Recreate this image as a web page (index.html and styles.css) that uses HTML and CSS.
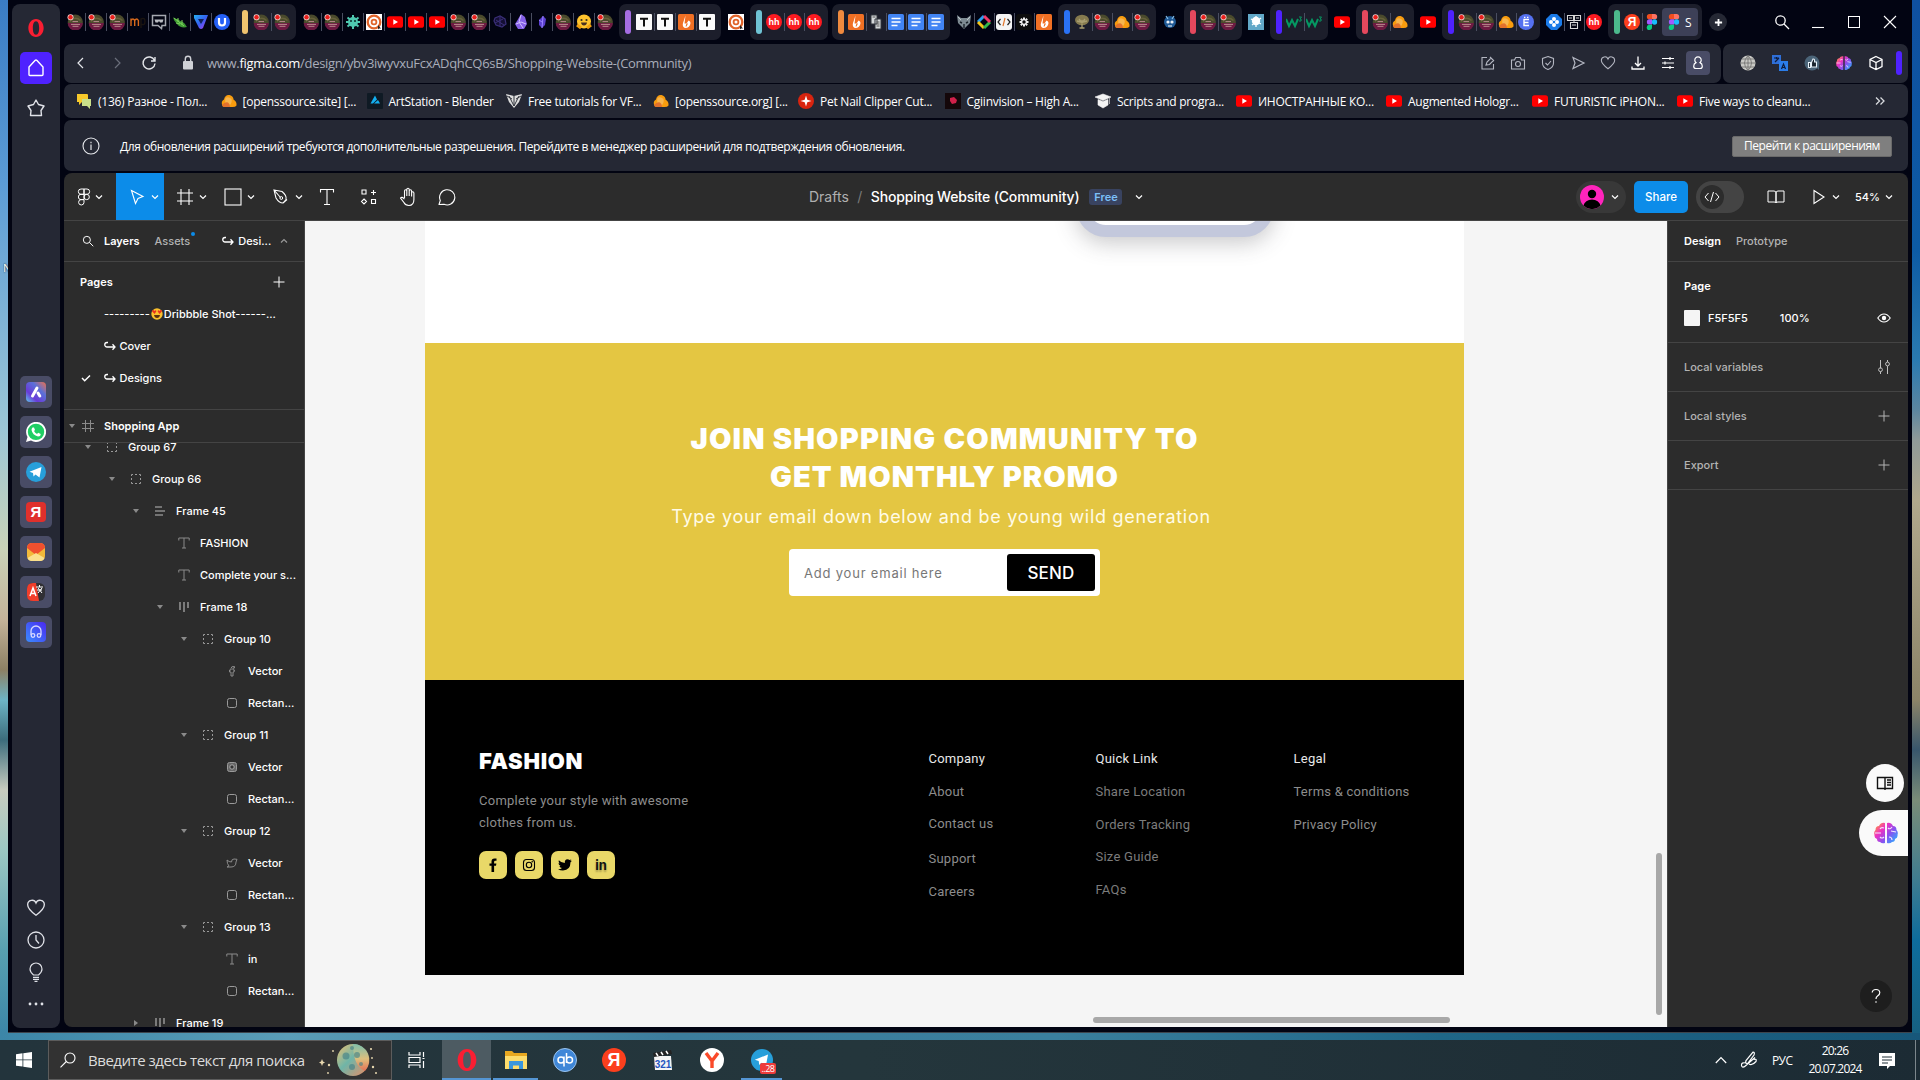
FILE: index.html
```html
<!DOCTYPE html>
<html lang="ru">
<head>
<meta charset="utf-8">
<title>Shopping Website (Community)</title>
<link rel="stylesheet" href="styles.css">
</head>
<body>
<svg class="defs" aria-hidden="true">
  <defs>
    <linearGradient id="g-brain" gradientUnits="userSpaceOnUse" x1="2" y1="2" x2="22" y2="20"><stop offset="0" stop-color="#ff9a3c"/><stop offset=".3" stop-color="#f032c0"/><stop offset=".62" stop-color="#8a50f0"/><stop offset="1" stop-color="#2ab0ff"/></linearGradient>
    <linearGradient id="g-aria" x1="0" y1="1" x2="1" y2="0"><stop offset="0" stop-color="#5fc8ee"/><stop offset=".3" stop-color="#6a3ad8"/><stop offset=".65" stop-color="#5a70d8"/><stop offset="1" stop-color="#f0704a"/></linearGradient>
    <linearGradient id="g-play" x1="0" y1="1" x2="1" y2="0"><stop offset="0" stop-color="#3a8cff"/><stop offset="1" stop-color="#4a28f0"/></linearGradient>
    <linearGradient id="g-v" x1="0" y1="0" x2="1" y2="1"><stop offset="0" stop-color="#25b0f0"/><stop offset=".5" stop-color="#3560f0"/><stop offset="1" stop-color="#c03cf0"/></linearGradient>
    <linearGradient id="g-moon" x1="0" y1="0" x2="1" y2="1"><stop offset="0" stop-color="#f0c070"/><stop offset=".45" stop-color="#6fb5a8"/><stop offset="1" stop-color="#f08a60"/></linearGradient>
    <linearGradient id="g-moon2" x1="0" y1="0" x2="0" y2="1"><stop offset="0" stop-color="#7ec0ae"/><stop offset=".55" stop-color="#e8c47a"/><stop offset="1" stop-color="#e86a50"/></linearGradient>
  </defs>
  <symbol id="radio" viewBox="0 0 16 16"><circle cx="8.300" cy="8" r="7.600" fill="#4a4a2c"/><path d="M.7 9h15.200a7.600 7.600 0 0 1-15.200 0z" fill="#6e1a42"/><path d="M3 7.500c3-4 7-4 10.500-1" stroke="#66613a" stroke-width="1.500" fill="none"/><path d="M5.500 7.600h5.500M4 10.400h9M5.500 12.300h6" stroke="#b98a8c" stroke-width="1"/><circle cx="3.500" cy="3.200" r="3" fill="#f1d0d0"/><circle cx="3.500" cy="3.200" r="2.200" fill="#e8201c"/></symbol>
  <symbol id="mp" viewBox="0 0 16 16"><path d="M1 12V4.500M1 6.500q2-3 3.700 0V12M4.700 6.500q2-3 3.700 0V12" fill="none" stroke="#d96a1c" stroke-width="1.400"/><path d="M11 14V5q4-2 4 2.500t-4 2.500" fill="none" stroke="#1a1410" stroke-width="1.400"/></symbol>
  <symbol id="bot" viewBox="0 0 16 16"><path d="M1.500 1.500h13v10h-3.500l-.5 3-3.500-3h-5.500z" fill="none" stroke="#a5a8b0" stroke-width="1.500"/><path d="M3.500 5.500h9l-1 3h-2.500l-1-1.500-1 1.500H4.500z" fill="#b9bcc2"/></symbol>
  <symbol id="leaf" viewBox="0 0 16 16"><path d="M1 3c3 3 4 1 6 3s3 1 5 3 2 3 3 4c-4 1-8 0-10-3S2 7 1 3z" fill="#3e9a34"/><path d="M2 4l10 8M6 4v4M10 6v5M4 9l4 1" stroke="#7cd05c" fill="none"/></symbol>
  <symbol id="vee" viewBox="0 0 16 16"><path d="M1 1h14l-5 13q-2 2-4 0L1 4z" fill="url(#g-v)"/><path d="M5 5h6l-3 5z" fill="#10205c"/></symbol>
  <symbol id="uu" viewBox="0 0 16 16"><circle cx="8" cy="8" r="8" fill="#2560f5"/><path d="M5 4v4.500a3 3 0 0 0 6 0V4" fill="none" stroke="#fff" stroke-width="2.200"/></symbol>
  <symbol id="virus" viewBox="0 0 16 16"><circle cx="8" cy="8" r="5" fill="#4fc8b0"/><path d="M8 1v14M1 8h14M2.500 3.500l11 9M13.500 3.500l-11 9" stroke="#4fc8b0" stroke-width="2"/><path d="M6 6v2M10 6v2" stroke="#0b2a2a" stroke-width="1.500"/></symbol>
  <symbol id="target" viewBox="0 0 16 16"><path d="M0 0h16v16H0z" fill="#fff"/><circle cx="8" cy="8" r="6.300" fill="none" stroke="#e0642a" stroke-width="2.300"/><circle cx="8" cy="8" r="2.400" fill="none" stroke="#e0642a" stroke-width="1.800"/><path d="M12 11v4.500l1-1h2z" fill="#222"/></symbol>
  <symbol id="yt" viewBox="0 0 16 16"><rect y="2.200" width="16" height="11.600" rx="2.600" fill="#f00"/><path d="M6.300 5.300v5.400L11 8z" fill="#fff"/></symbol>
  <symbol id="rock" viewBox="0 0 16 16"><path d="M3 4l5-2 5 3 1 5-4 3-6-2-2-4z" fill="#140f34" stroke="#3a2f78" stroke-width="1.200"/><path d="M4 6l8 5M8 3v9M3 9l8-4" stroke="#3a2f78"/></symbol>
  <symbol id="obs" viewBox="0 0 16 16"><path d="M8 0l4 3 2 7-3 5H5l-3-5 2-3z" fill="#8560e8"/><path d="M8 1L6 8l4 6M3 10l5-2 5 2" stroke="#d4c3ff" fill="none"/></symbol>
  <symbol id="gem" viewBox="0 0 16 16"><path d="M9 2l3 3-1 6-3 3-3-3V6z" fill="#5b3fd0"/><path d="M9 2L8 14M5 6l3 2" stroke="#9a85ff"/></symbol>
  <symbol id="hug" viewBox="0 0 16 16"><circle cx="8" cy="7.500" r="7" fill="#ffc42e"/><circle cx="5.500" cy="6" r="1.100" fill="#3a3020"/><circle cx="10.500" cy="6" r="1.100" fill="#3a3020"/><path d="M5 8.500h6q-.5 3-3 3t-3-3z" fill="#4a3020"/><path d="M1 11l4 3M15 11l-4 3" stroke="#f0a010" stroke-width="3"/></symbol>
  <symbol id="tt" viewBox="0 0 16 16"><rect width="16" height="16" rx="1" fill="#fafafa"/><path d="M4 4.800h8M8 4.800V12.500" stroke="#111" stroke-width="2"/></symbol>
  <symbol id="bolt" viewBox="0 0 16 16"><rect width="16" height="16" rx="1.500" fill="#f07024"/><path d="M7.500 1.500L5 9q-1 4 2 5 5 0 5.500-5 0-2-2-2.500l-2 3h-2z" fill="#fff"/><path d="M8.500 9.500l1.500 0-1.500 3-1 0z" fill="#f07024"/></symbol>
  <symbol id="hh" viewBox="0 0 16 16"><circle cx="8" cy="8" r="8" fill="#fb1a20"/><text x="8" y="11.200" text-anchor="middle" font-size="9" font-weight="700" fill="#fff">hh</text></symbol>
  <symbol id="pages" viewBox="0 0 16 16"><path d="M3 1h6v9H3zM7 5h6v10H7z" fill="#d5d8da" stroke="#30343c"/><path d="M8.500 8h3M8.500 10h3M8.500 12h3M4.500 3h3" stroke="#555"/></symbol>
  <symbol id="doc" viewBox="0 0 16 16"><rect width="16" height="16" rx="1.500" fill="#4285f4"/><path d="M3.500 4.500h9M3.500 8h9M3.500 11.500h6" stroke="#fff" stroke-width="1.600"/></symbol>
  <symbol id="fox" viewBox="0 0 16 16"><path d="M1 1l4 3h6l4-3-1 8-4 4-2 2-2-2-4-4z" fill="#7d8a92"/><path d="M4 8l2 1M12 8l-2 1M8 10v4" stroke="#1b232a" stroke-width="1.400"/><path d="M2 3l3 3M14 3l-3 3" stroke="#bfc8cc"/></symbol>
  <symbol id="diamond" viewBox="0 0 16 16"><path d="M8 2L2 8" stroke="#2aa0f0" stroke-width="3"/><path d="M2 8l6 6" stroke="#f5c518" stroke-width="3"/><path d="M8 14l6-6" stroke="#35b84a" stroke-width="3"/><path d="M14 8L8 2" stroke="#f03a6a" stroke-width="3"/></symbol>
  <symbol id="code" viewBox="0 0 16 16"><rect width="16" height="16" rx="3" fill="#f4f4f4"/><path d="M4.500 5L2 8l2.500 3M11.500 5L14 8l-2.500 3" stroke="#222" fill="none" stroke-width="1.200"/><path d="M9 4l-2 8" stroke="#e0742a" stroke-width="1.200"/></symbol>
  <symbol id="flower" viewBox="0 0 16 16"><rect width="16" height="16" rx="3" fill="#0d0d0d"/><path d="M8 3.500v9M3.500 8h9M4.800 4.800l6.400 6.400M11.200 4.800l-6.400 6.400" stroke="#eee" stroke-width="2"/><circle cx="8" cy="8" r="1.700" fill="#0d0d0d"/></symbol>
  <symbol id="tree" viewBox="0 0 16 16"><ellipse cx="8" cy="6" rx="7" ry="5.200" fill="#857a4e"/><path d="M8 6v8M5 5l3 4 3-4M5.500 14h5M3 7l4 1M13 7l-4 1" stroke="#a99e70" fill="none" stroke-width="1.300"/></symbol>
  <symbol id="pma" viewBox="0 0 16 16"><path d="M1 11.500q-1-3.500 2-5 1-5 5.500-4.500 4 1 4 4.500 3.500 2 3 6-1 1.500-4 1.500H3.500q-2 0-2.500-2.500z" fill="#f89c0e"/><path d="M4.500 5q3-2 6 1 1 4-2.500 7-5-1-3.500-8z" fill="#f6c06a" opacity=".7"/><path d="M1 12q3-3.500 6-2.500 2 1 2 4.500H3.500Q1.500 14 1 12z" fill="#e2712c"/></symbol>
  <symbol id="owl" viewBox="0 0 16 16"><circle cx="8" cy="8" r="6" fill="#1f5a96"/><path d="M4 2l2 3M12 2l-2 3" stroke="#8ac0e8" stroke-width="1.200"/><circle cx="6" cy="8" r="1.600" fill="#e8eef5"/><circle cx="10" cy="8" r="1.600" fill="#e8eef5"/><path d="M6 12h4" stroke="#fff"/></symbol>
  <symbol id="splat" viewBox="0 0 16 16"><rect width="16" height="16" fill="#62a8c8"/><circle cx="8" cy="7" r="4.200" fill="#fff"/><path d="M8 2v11M3 5l10 5M13 4L4 11" stroke="#fff" stroke-width="1.300"/></symbol>
  <symbol id="w3" viewBox="0 0 16 16"><path d="M0 5l3 7 3-6 3 6 3-7" fill="none" stroke="#059862" stroke-width="2"/><path d="M13 3h2.500L14 5q2 0 1 2h-2" fill="none" stroke="#059862"/></symbol>
  <symbol id="ee" viewBox="0 0 16 16"><circle cx="8" cy="8" r="8" fill="#5571f0"/><path d="M11 5.500H6v6h5M6 8.500h4.500" stroke="#fff" stroke-width="1.400" fill="none"/><path d="M6 3.300h1.400M9 3.300h1.400" stroke="#fff" stroke-width="1.300"/></symbol>
  <symbol id="clover" viewBox="0 0 16 16"><path d="M5 0h6l5 5v6l-5 5H5l-5-5V5z" fill="#1b7be8"/><circle cx="8" cy="5" r="2" fill="#fff"/><circle cx="8" cy="11" r="2" fill="#fff"/><circle cx="5" cy="8" r="2" fill="#fff"/><circle cx="11" cy="8" r="2" fill="#fff"/></symbol>
  <symbol id="robots" viewBox="0 0 16 16"><path d="M1.500 1.500h6v5h-6zM8.500 1.500h6v5h-6zM4.500 8.500h7v6h-7z" fill="none" stroke="#d8d8d8" stroke-width="1.100"/><path d="M3 4h3M10 4h3M6 11h4M8 7v2" stroke="#d8d8d8"/></symbol>
  <symbol id="ya" viewBox="0 0 16 16"><circle cx="8" cy="8" r="8" fill="#fc3f1d"/><text x="8" y="12.300" text-anchor="middle" font-size="12" font-weight="700" fill="#fff">Я</text></symbol>
  <symbol id="fig" viewBox="0 0 16 16"><path d="M5.500 0H8v5.300H5.500a2.650 2.650 0 0 1 0-5.300z" fill="#f24e1e"/><path d="M8 0h2.500a2.650 2.650 0 0 1 0 5.300H8z" fill="#ff7262"/><path d="M5.500 5.300H8v5.300H5.500a2.650 2.650 0 0 1 0-5.300z" fill="#a259ff"/><circle cx="10.500" cy="8" r="2.650" fill="#1abcfe"/><path d="M5.500 10.700H8v2.650a2.650 2.650 0 1 1-2.500-2.650z" fill="#0acf83"/></symbol>
  <symbol id="opera" viewBox="0 0 20 20"><path fill-rule="evenodd" d="M10 0c5 0 8.500 4.500 8.500 10S15 20 10 20 1.500 15.500 1.500 10 5 0 10 0zm0 2.500C7.500 2.500 6.500 6 6.500 10s1 7.500 3.500 7.500 3.500-3.500 3.500-7.500-1-7.500-3.500-7.500z" fill="#fa1e32"/></symbol>
  <symbol id="brain" viewBox="0 0 24 22"><path d="M11 1v20q-3 1-5-1-3 0-3-3-3-1-2.500-4-1-3 1-5 0-4 3.500-4 2-4 6-3z" fill="url(#g-brain)"/><path d="M13 1v20q3 1 5-1 3 0 3-3 3-1 2.500-4 1-3-1-5 0-4-3.500-4-2-4-6-3z" fill="url(#g-brain)"/><path d="M10 6q-3-1-4 1M1 11h6M10 15q-2 2-4 0M14 6q2 2 4-1M17 9l5 1M15 15q3 0 3 3" stroke="#f5e8ff" stroke-width="1.100" fill="none"/></symbol>
  <symbol id="chev" viewBox="0 0 8 8"><path d="M1 2.500l3 3 3-3" fill="none" stroke="currentColor" stroke-width="1.200"/></symbol>
  <symbol id="tri" viewBox="0 0 8 8"><path d="M1 2h6L4 6z" fill="#8a8a8a"/></symbol>
  <symbol id="group" viewBox="0 0 12 12"><rect x="1.500" y="1.500" width="9" height="9" fill="none" stroke="#9a9a9a" stroke-dasharray="1.500 2 2 2 1.500 0"/></symbol>
  <symbol id="rows" viewBox="0 0 12 12"><path d="M1 2h7M1 6h10M1 10h8" stroke="#8a8a8a" stroke-width="1.700"/></symbol>
  <symbol id="cols" viewBox="0 0 12 12"><path d="M2 1v8M6 1v10M10 1v6" stroke="#8a8a8a" stroke-width="1.700"/></symbol>
  <symbol id="txt" viewBox="0 0 12 12"><path d="M.8 3.500V1h10.400v2.500M6 1v10M4 11h4" fill="none" stroke="#8a8a8a"/></symbol>
  <symbol id="rect" viewBox="0 0 12 12"><rect x="1.500" y="1.500" width="9" height="9" rx="2" fill="none" stroke="#9a9a9a"/></symbol>
  <symbol id="plus" viewBox="0 0 12 12"><path d="M6 .5v11M.5 6h11" stroke="currentColor"/></symbol>
  <symbol id="search" viewBox="0 0 16 16"><circle cx="6.500" cy="6.500" r="4.700" fill="none" stroke="currentColor" stroke-width="1.300"/><path d="M10 10l5 5" stroke="currentColor" stroke-width="1.300"/></symbol>
  <symbol id="heart" viewBox="0 0 18 18"><path d="M9 15.500C5 12.500 1.500 9.500 1.500 6a3.900 3.900 0 0 1 7.500-1.500A3.900 3.900 0 0 1 16.500 6c0 3.500-3.500 6.500-7.500 9.500z" fill="none" stroke="currentColor" stroke-width="1.200"/></symbol>
  <symbol id="tg" viewBox="0 0 20 20"><circle cx="10" cy="10" r="10" fill="#279fda"/><path d="M3.500 9.800L15.500 5l-2 10.500-4-3-2 2-.5-3.500z" fill="#fff"/></symbol>
  <symbol id="turn" viewBox="0 0 12 10"><path d="M4 1.500H3a2 2 0 0 0 0 4.500h8M8.500 3.300L11 6 8.500 8.700" fill="none" stroke="currentColor" stroke-width="1.300"/></symbol>
</svg>

<div class="window">
  <aside class="rail">
    <svg class="i17 op"><use href="#opera"/></svg>
    <span class="home"><svg class="i20" viewBox="0 0 20 20"><path d="M4 17.500q-1 0-1-1V9l6-6.500q1-1 2 0L17 9v7.500q0 1-1 1z" fill="none" stroke="#fff" stroke-width="1.400"/></svg></span>
    <svg class="i20 star" viewBox="0 0 20 20"><path d="M10 2l2.500 4.500L18 8l-3 4.500.5 5H4.500l.5-5L2 8l5.500-1.500z" fill="none" stroke="#e0e2e8" stroke-width="1.400" stroke-linejoin="round"/></svg>
    <div class="apps">
      <span><svg class="i20" viewBox="0 0 20 20"><rect width="20" height="20" rx="4" fill="url(#g-aria)"/><path d="M6.500 14L11 6M12 11l1.800 3" stroke="#fff" stroke-width="3" stroke-linecap="round" fill="none"/></svg></span>
      <span><svg class="i20" viewBox="0 0 20 20"><path d="M0 20l1.500-5A10 10 0 1 1 5 18.500z" fill="#fff"/><circle cx="10" cy="9.900" r="8.200" fill="#1fcf64"/><path d="M6.500 5.500l1.500 0 1 2.500-1 1q1 2 3 3l1.200-1.200 2.500 1.200q0 2.500-2.700 2.500Q6.500 13 5.500 8q0-1.500 1-2.500z" fill="#fff"/></svg></span>
      <span><svg class="i20"><use href="#tg"/></svg></span>
      <span><svg class="i20" viewBox="0 0 20 20"><rect width="20" height="20" rx="4" fill="#e0302c"/><text x="10" y="15.300" text-anchor="middle" font-size="15" font-weight="700" fill="#fff">Я</text></svg></span>
      <span><svg class="i20" viewBox="0 0 20 20"><rect x="1" y="1" width="18" height="18" rx="5" fill="#f2b93a"/><path d="M1 6q0-5 5-5h8q5 0 5 5l-9 7z" fill="#f0502e"/><path d="M1.500 16l8.500-5 8.500 5q-1 3-4 3h-9q-3 0-4-3z" fill="#fbe08c"/></svg></span>
      <span><svg class="i20" viewBox="0 0 20 20"><rect x="1" y="1" width="18" height="18" rx="6" fill="#303034"/><path d="M7 1h3l3 18H7q-6 0-6-6V7q0-6 6-6z" fill="#f03e2c"/><path d="M4 14l3-8 3 8M5 11.500h4" fill="none" stroke="#fff" stroke-width="1.500"/><path d="M10 5h7M13.500 3v2M11 8h5M12 11l4-5M12 6l4 5" stroke="#fff" fill="none"/></svg></span>
      <span><svg class="i20" viewBox="0 0 20 20"><rect width="20" height="20" rx="4" fill="url(#g-play)"/><path d="M5 13V9a5 5 0 0 1 10 0v4" fill="none" stroke="#d8d8ff" stroke-width="1.300"/><circle cx="7" cy="13.500" r="1.800" fill="none" stroke="#d8d8ff" stroke-width="1.300"/><circle cx="13" cy="13.500" r="1.800" fill="none" stroke="#d8d8ff" stroke-width="1.300"/></svg></span>
    </div>
    <div class="rail-end">
      <svg class="i20"><use href="#heart"/></svg>
      <svg class="i20" viewBox="0 0 20 20"><circle cx="10" cy="10" r="8" fill="none" stroke="currentColor" stroke-width="1.300"/><path d="M10 5v5l3 3.500" fill="none" stroke="currentColor" stroke-width="1.300"/></svg>
      <svg class="i20 bulb" viewBox="0 0 20 20"><path d="M7.500 13q-3.500-3-3.500-6a6 6 0 0 1 12 0q0 3-3.500 6zM7 15.300h6M7 17.300h6M8.500 19.300h3" fill="none" stroke="currentColor" stroke-width="1.200"/></svg>
      <svg class="i20" viewBox="0 0 20 20"><g fill="currentColor"><circle cx="4" cy="10" r="1.400"/><circle cx="10" cy="10" r="1.400"/><circle cx="16" cy="10" r="1.400"/></g></svg>
    </div>
  </aside>

  <main class="main">
    <div class="tabs">
      <div class="set wide"><i><svg><use href="#radio"/></svg></i><i><svg><use href="#radio"/></svg></i><i><svg><use href="#radio"/></svg></i><i><svg><use href="#mp"/></svg></i><i><svg><use href="#bot"/></svg></i><i><svg><use href="#leaf"/></svg></i><i><svg><use href="#vee"/></svg></i><i><svg><use href="#uu"/></svg></i></div>
      <div class="set wide island sand"><i><svg><use href="#radio"/></svg></i><i><svg><use href="#radio"/></svg></i></div>
      <div class="set wide"><i><svg><use href="#radio"/></svg></i><i><svg><use href="#radio"/></svg></i><i><svg><use href="#virus"/></svg></i><i><svg><use href="#target"/></svg></i><i><svg><use href="#yt"/></svg></i><i><svg><use href="#yt"/></svg></i><i><svg><use href="#yt"/></svg></i><i><svg><use href="#radio"/></svg></i><i><svg><use href="#radio"/></svg></i><i><svg><use href="#rock"/></svg></i><i><svg><use href="#obs"/></svg></i><i><svg><use href="#gem"/></svg></i><i><svg><use href="#radio"/></svg></i><i><svg><use href="#hug"/></svg></i><i><svg><use href="#radio"/></svg></i></div>
      <div class="set wide island violet"><i><svg><use href="#tt"/></svg></i><i><svg><use href="#tt"/></svg></i><i><svg><use href="#bolt"/></svg></i><i><svg><use href="#tt"/></svg></i></div>
      <div class="set wide"><i><svg><use href="#target"/></svg></i></div>
      <div class="set island aqua"><i><svg><use href="#hh"/></svg></i><i><svg><use href="#hh"/></svg></i><i><svg><use href="#hh"/></svg></i></div>
      <div class="set island orange"><i><svg><use href="#bolt"/></svg></i><i><svg><use href="#pages"/></svg></i><i><svg><use href="#doc"/></svg></i><i><svg><use href="#doc"/></svg></i><i><svg><use href="#doc"/></svg></i></div>
      <div class="set"><i><svg><use href="#fox"/></svg></i><i><svg><use href="#diamond"/></svg></i><i><svg><use href="#code"/></svg></i><i><svg><use href="#flower"/></svg></i><i><svg><use href="#bolt"/></svg></i></div>
      <div class="set island blue"><i><svg><use href="#tree"/></svg></i><i><svg><use href="#radio"/></svg></i><i><svg><use href="#pma"/></svg></i><i><svg><use href="#radio"/></svg></i></div>
      <div class="set"><i><svg><use href="#owl"/></svg></i></div>
      <div class="set island red"><i><svg><use href="#radio"/></svg></i><i><svg><use href="#radio"/></svg></i></div>
      <div class="set"><i><svg><use href="#splat"/></svg></i></div>
      <div class="set island indigo"><i><svg><use href="#w3"/></svg></i><i><svg><use href="#w3"/></svg></i></div>
      <div class="set"><i><svg><use href="#yt"/></svg></i></div>
      <div class="set island red"><i><svg><use href="#radio"/></svg></i><i><svg><use href="#pma"/></svg></i></div>
      <div class="set"><i><svg><use href="#yt"/></svg></i></div>
      <div class="set island indigo"><i><svg><use href="#radio"/></svg></i><i><svg><use href="#radio"/></svg></i><i><svg><use href="#pma"/></svg></i><i><svg><use href="#ee"/></svg></i></div>
      <div class="set"><i><svg><use href="#clover"/></svg></i><i><svg><use href="#robots"/></svg></i><i><svg><use href="#hh"/></svg></i></div>
      <div class="set island green"><i><svg><use href="#ya"/></svg></i><i><svg><use href="#fig"/></svg></i><b class="active"><svg><use href="#fig"/></svg><span>S</span></b></div>
      <span class="newtab"><svg viewBox="0 0 10 10"><path d="M5 1v8M1 5h8" stroke="#fff" stroke-width="2"/></svg></span>
      <div class="caption">
        <svg><use href="#search"/></svg>
        <svg viewBox="0 0 16 16"><path d="M2 13.500h12" stroke="#fff" stroke-width="1.100"/></svg>
        <svg viewBox="0 0 16 16"><rect x="2.500" y="2.500" width="11" height="11" fill="none" stroke="#fff"/></svg>
        <svg viewBox="0 0 16 16"><path d="M2 2l12 12M14 2L2 14" stroke="#fff" stroke-width="1.100"/></svg>
      </div>
    </div>

    <div class="addr-row">
      <div class="panel addr">
        <svg viewBox="0 0 16 16"><path d="M10 3L5 8l5 5" fill="none" stroke="#e4e6ea" stroke-width="1.200"/></svg>
        <svg viewBox="0 0 16 16"><path d="M6 3l5 5-5 5" fill="none" stroke="#6b6f7b" stroke-width="1.200"/></svg>
        <svg viewBox="0 0 16 16"><path d="M13.500 5.500A6 6 0 1 0 14 8.500M14 2v4h-4" fill="none" stroke="#e4e6ea" stroke-width="1.400"/></svg>
        <svg class="lock" viewBox="0 0 16 16"><rect x="3" y="6" width="10" height="8.500" rx="1" fill="#cfd1d6"/><path d="M5.300 6.500V4a2.700 2.700 0 0 1 5.400 0v2.500" fill="none" stroke="#cfd1d6" stroke-width="1.400"/></svg>
        <span class="url">www.<em>figma.com</em>/design/ybv3iwyvxuFcxADqhCQ6sB/Shopping-Website-(Community)</span>
        <div class="tools">
          <svg viewBox="0 0 16 16"><path d="M7 2.500H2v11.500h11.500V9M6 10l1-3 4-4 2.500 2.500-4 4zM10 2l4 4" fill="none" stroke="currentColor" stroke-width="1.100"/></svg>
          <svg viewBox="0 0 16 16"><path d="M1.500 5h3l1.200-2.500h4.600L11.500 5h3v9h-13z" fill="none" stroke="currentColor" stroke-width="1.100"/><circle cx="8" cy="9" r="2.500" fill="none" stroke="currentColor" stroke-width="1.100"/></svg>
          <svg viewBox="0 0 16 16"><path d="M8 1.500l5.500 2V8q0 4.500-5.500 6.500Q2.500 12.500 2.500 8V3.500zM5.500 8l2 2 3.500-4" fill="none" stroke="currentColor" stroke-width="1.100"/></svg>
          <svg viewBox="0 0 16 16"><path d="M3 2.500L14 8 3 13.500 5 8z" fill="none" stroke="currentColor" stroke-width="1.200"/></svg>
          <svg><use href="#heart"/></svg>
          <svg class="hot" viewBox="0 0 16 16"><path d="M8 1.500v9M5 8l3 3 3-3M2 11.500V14h12v-2.500" fill="none" stroke="currentColor" stroke-width="1.300"/></svg>
          <svg class="hot" viewBox="0 0 16 16"><path d="M2 3.500h12M2 8h12M2 12.500h12M10 2v3M5 6.500v3M10 11v3" stroke="currentColor" stroke-width="1.200"/></svg>
          <span class="user"><svg viewBox="0 0 16 16"><path d="M6 7.600a3.200 3.200 0 1 1 4 0q2.300 1 2.300 3.600 0 2.300-2.300 2.300H6q-2.300 0-2.300-2.300 0-2.600 2.300-3.600z" fill="none" stroke="#fff" stroke-width="1.200"/></svg></span>
        </div>
      </div>
      <div class="panel ext">
        <svg viewBox="0 0 16 16"><circle cx="8" cy="8" r="7.500" fill="#c8c8c4"/><path d="M8 0v16M0 8h16M2 4h12M2 12h12M8 .5q-7 7.500 0 15M8 .5q7 7.500 0 15" fill="none" stroke="#6d6d6d" stroke-width=".8"/></svg>
        <svg viewBox="0 0 16 16"><path d="M0 0h9v9H0z" fill="#2f6fd8"/><path d="M7 6h9v10H7z" fill="#2b7de9"/><path d="M2 3h5M4.500 2v2M3 7l4-4M9.500 14l2-5 2 5M10 12.500h3" stroke="#0e1c3c" stroke-width="1.200" fill="none"/></svg>
        <svg viewBox="0 0 16 16"><circle cx="8" cy="8" r="7.500" fill="#4b6478"/><path d="M9 9h6v6z" fill="#4b6478"/><path d="M4.500 7.500h2v5h-2zM7.500 7.500L9 4q2-.5 1.500 3h2v5h-5z" fill="#17212b" stroke="#e8f2fa" stroke-width="1.100"/></svg>
        <svg><use href="#brain"/></svg>
        <svg viewBox="0 0 16 16"><path d="M8 1.500l6 3v7l-6 3-6-3v-7zM2 4.500l6 3 6-3M8 7.500v7" fill="none" stroke="#fff" stroke-width="1.300"/></svg>
        <span class="mark"></span>
      </div>
    </div>

    <nav class="panel bookmarks">
      <a><svg viewBox="0 0 16 16"><path d="M1 1h10q1 0 1 1v6q0 1-1 1H6l-3 3V9H1z" fill="#f7c92a"/><path d="M6 6h9v7h-1v3l-3-3H6z" fill="#c9e08a"/></svg>(136) Разное - Пол...</a>
      <a><svg><use href="#pma"/></svg>[openssource.site] [...</a>
      <a><svg viewBox="0 0 16 16"><rect width="16" height="16" rx="1" fill="#0f1a24"/><path d="M8 2.500l2 4-4 4H3.500zM7 10.500h6l-2-3.500z" fill="#13aff0"/></svg>ArtStation - Blender</a>
      <a><svg viewBox="0 0 16 16"><path d="M0 1l8 2 8-2-3 8-5 6-5-6z" fill="#dedede"/><path d="M3 3l5 10 5-10M8 3v10M1 3l5 3M15 3l-5 3" stroke="#33363f" fill="none"/></svg>Free tutorials for VF...</a>
      <a><svg><use href="#pma"/></svg>[openssource.org] [...</a>
      <a><svg viewBox="0 0 16 16"><circle cx="8" cy="8" r="8" fill="#d8240f"/><path d="M8 2.500L9.300 6.700 13.500 8 9.300 9.300 8 13.500 6.700 9.300 2.500 8l4.200-1.300z" fill="#fff"/></svg>Pet Nail Clipper Cut...</a>
      <a><svg viewBox="0 0 16 16"><rect width="16" height="16" fill="#14070a"/><path d="M5 5l4-1 3 3-1 3-4 1-2-3z" fill="#d0204a"/></svg>Cgiinvision – High A...</a>
      <a><svg viewBox="0 0 16 16"><path d="M0 4l8-3 8 3-8 3.500zM3 6.500l5 2 5-2V12l-5 3-5-3zM14.500 5v6" fill="#f4f4f4" stroke="#f4f4f4" stroke-width=".6"/></svg>Scripts and progra...</a>
      <a><svg><use href="#yt"/></svg>ИНОСТРАННЫЕ КО...</a>
      <a><svg><use href="#yt"/></svg>Augmented Hologr...</a>
      <a><svg><use href="#yt"/></svg>FUTURISTIC iPHON...</a>
      <a><svg><use href="#yt"/></svg>Five ways to cleanu...</a>
      <svg class="more" viewBox="0 0 16 16"><path d="M4 4.500L7.500 8 4 11.500M8.500 4.500L12 8l-3.500 3.500" fill="none" stroke="#d8dade" stroke-width="1.300"/></svg>
    </nav>

    <div class="panel notice">
      <svg class="i18" viewBox="0 0 18 18"><circle cx="9" cy="9" r="8" fill="none" stroke="#e6e8ec" stroke-width="1.100"/><path d="M9 7.500v5.500M9 4.800v1.400" stroke="#e6e8ec" stroke-width="1.200"/></svg>
      <p>Для обновления расширений требуются дополнительные разрешения. Перейдите в менеджер расширений для подтверждения обновления.</p>
      <button>Перейти к расширениям</button>
    </div>

    <section class="figma">
      <header class="bar">
        <div class="cell logo"><svg viewBox="0 0 14 18"><path d="M4 1h3v5.300H4A2.650 2.650 0 0 1 4 1zM7 1h3a2.650 2.650 0 0 1 0 5.300H7zM4 6.300h3v5.300H4a2.650 2.650 0 0 1 0-5.300zM4 11.600h3v2.700a2.700 2.700 0 1 1-3-2.700z" fill="none" stroke="#fff"/><circle cx="9.700" cy="9" r="2.650" fill="none" stroke="#fff"/></svg><svg class="chev"><use href="#chev"/></svg></div>
        <div class="cell on"><svg viewBox="0 0 18 18"><path d="M3.500 2.500l11.500 6-5 2-2.500 5z" fill="none" stroke="#fff" stroke-width="1.100"/></svg><svg class="chev"><use href="#chev"/></svg></div>
        <div class="cell"><svg viewBox="0 0 18 18"><path d="M5 1v16M13 1v16M1 5h16M1 13h16" stroke="#fff" stroke-width="1.100"/></svg><svg class="chev"><use href="#chev"/></svg></div>
        <div class="cell"><svg viewBox="0 0 18 18"><rect x="1" y="1" width="16" height="16" fill="none" stroke="#fff" stroke-width="1.100"/></svg><svg class="chev"><use href="#chev"/></svg></div>
        <div class="cell"><svg viewBox="0 0 18 18"><path d="M2 2l8 1.500q5 4 4 8L11 15q-4 0-7-5zM2 2l6.500 7.500M11 15l4-3.500" fill="none" stroke="#fff" stroke-width="1.100"/><circle cx="9.300" cy="10" r="1.400" fill="none" stroke="#fff"/></svg><svg class="chev"><use href="#chev"/></svg></div>
        <div class="cell one"><svg viewBox="0 0 18 18"><path d="M2.500 4.500V1.500h13v3M9 1.500v15M6 16.500h6" fill="none" stroke="#fff" stroke-width="1.100"/></svg></div>
        <div class="cell one comp"><svg viewBox="0 0 18 18"><path d="M2 2h4v4H2zM13.500 2v5M11 4.500h5M11.500 11.500h4v4h-4zM4 11l2.500 2.500L4 16l-2.500-2.500z" fill="none" stroke="#fff" stroke-width="1.100"/></svg></div>
        <div class="cell one"><svg class="hand" viewBox="0 0 20 20"><path d="M6.500 11V4q0-1.300 1.100-1.300T8.800 4v5M8.800 9V2.500q0-1.300 1.200-1.300t1.200 1.300V9M11.200 4q0-1.300 1.200-1.300T13.600 4v5.500M13.600 6q0-1.200 1.100-1.200T15.900 6v6.500q0 6-5 6-3.500 0-5-3L2.500 11q1.500-1.800 4 1.200" fill="none" stroke="#fff" stroke-width="1.100"/></svg></div>
        <div class="cell one say"><svg viewBox="0 0 18 18"><path d="M1 16.500l1.300-4A7.600 7.600 0 1 1 6 16.200z" fill="none" stroke="#fff" stroke-width="1.100" stroke-linejoin="round"/></svg></div>
        <div class="crumb"><span>Drafts</span><u>/</u><strong>Shopping Website (Community)</strong><em>Free</em><svg class="chev"><use href="#chev"/></svg></div>
        <div class="acts">
          <div class="me"><svg class="face" viewBox="0 0 24 24"><circle cx="12" cy="12" r="12" fill="#ff24bd"/><circle cx="12" cy="9" r="4.200"/><path d="M3.500 20.500a8.600 7 0 0 1 17 0A12 12 0 0 1 3.500 20.500z"/></svg><svg class="chev"><use href="#chev"/></svg></div>
          <button class="share">Share</button>
          <div class="toggle"><span><svg viewBox="0 0 16 12"><path d="M4.500 2L1 6l3.500 4M11.500 2L15 6l-3.500 4M9.500 1l-3 10" fill="none" stroke="#fff"/></svg></span></div>
          <svg class="i18 book" viewBox="0 0 18 18"><path d="M1 3h6q2 0 2 2v10q0-1-2-1H1zM17 3h-6q-2 0-2 2v10q0-1 2-1h6z" fill="none" stroke="#fff"/></svg>
          <svg class="i18 play" viewBox="0 0 18 18"><path d="M4 2.500L14 9 4 15.500z" fill="none" stroke="#fff" stroke-width="1.100"/></svg>
          <svg class="chev"><use href="#chev"/></svg>
          <span class="pct">54%</span><svg class="chev"><use href="#chev"/></svg>
        </div>
      </header>

      <div class="work">
        <aside class="left">
          <div class="ltabs"><svg class="s12"><use href="#search"/></svg><b>Layers</b><span class="assets">Assets<i></i></span><span class="pg"><svg class="turn"><use href="#turn"/></svg>Desi...</span><svg class="chev up"><use href="#chev"/></svg></div>
          <div class="pages">
            <div class="phead"><b>Pages</b><svg class="s12"><use href="#plus"/></svg></div>
            <div class="prow"><span>---------</span><svg class="emoji" viewBox="0 0 12 12"><circle cx="6" cy="6" r="5.700" fill="#fbc02d"/><path d="M.8 3q1.500-2 2.500 0 2-1.500 2 .5L3.500 6zM11.200 3q-1.500-2-2.500 0-2-1.500-2 .5L8.500 6z" fill="#e8321e"/><path d="M3 7h6q-.5 3-3 3T3 7z" fill="#5a3010"/></svg><span>Dribbble Shot------...</span></div>
            <div class="prow"><svg class="turn"><use href="#turn"/></svg><span>Cover</span></div>
            <div class="prow"><svg class="check" viewBox="0 0 10 8"><path d="M1 4l2.700 2.700L9 1.500" fill="none" stroke="#fff" stroke-width="1.500"/></svg><svg class="turn"><use href="#turn"/></svg><span>Designs</span></div>
          </div>
          <div class="root"><svg class="tri"><use href="#tri"/></svg><svg class="s12" viewBox="0 0 12 12"><path d="M3.500 0v12M8.500 0v12M0 3.500h12M0 8.500h12" stroke="#8a8a8a"/></svg><b>Shopping App</b></div>
          <div class="tree">
            <div class="row l1 cut"><svg class="tri"><use href="#tri"/></svg><svg class="s12"><use href="#group"/></svg><span>Group 67</span></div>
            <div class="row l2"><svg class="tri"><use href="#tri"/></svg><svg class="s12"><use href="#group"/></svg><span>Group 66</span></div>
            <div class="row l3"><svg class="tri"><use href="#tri"/></svg><svg class="s12"><use href="#rows"/></svg><span>Frame 45</span></div>
            <div class="row l4"><svg class="tri"></svg><svg class="s12"><use href="#txt"/></svg><span>FASHION</span></div>
            <div class="row l4"><svg class="tri"></svg><svg class="s12"><use href="#txt"/></svg><span>Complete your s...</span></div>
            <div class="row l4"><svg class="tri"><use href="#tri"/></svg><svg class="s12"><use href="#cols"/></svg><span>Frame 18</span></div>
            <div class="row l5"><svg class="tri"><use href="#tri"/></svg><svg class="s12"><use href="#group"/></svg><span>Group 10</span></div>
            <div class="row l6"><svg class="tri"></svg><svg class="s12" viewBox="0 0 12 12"><path d="M5 11V7H3.500V5H5V3.500Q5 1 8.500 1.500V3H7v2h1.500L8 7H7v4z" fill="none" stroke="#8a8a8a"/></svg><span>Vector</span></div>
            <div class="row l6"><svg class="tri"></svg><svg class="s12"><use href="#rect"/></svg><span>Rectan...</span></div>
            <div class="row l5"><svg class="tri"><use href="#tri"/></svg><svg class="s12"><use href="#group"/></svg><span>Group 11</span></div>
            <div class="row l6"><svg class="tri"></svg><svg class="s12" viewBox="0 0 12 12"><rect x="1.500" y="1.500" width="9" height="9" rx="2" fill="#666" stroke="#9a9a9a"/><circle cx="6" cy="6" r="2.200" fill="#333" stroke="#aaa"/></svg><span>Vector</span></div>
            <div class="row l6"><svg class="tri"></svg><svg class="s12"><use href="#rect"/></svg><span>Rectan...</span></div>
            <div class="row l5"><svg class="tri"><use href="#tri"/></svg><svg class="s12"><use href="#group"/></svg><span>Group 12</span></div>
            <div class="row l6"><svg class="tri"></svg><svg class="s12" viewBox="0 0 12 12"><path d="M1 3q2 2 4.500 2Q5.500 2 8 2l3 .3L10 5q0 5-5 5H1l2-1Q1 7 1 3z" fill="none" stroke="#8a8a8a"/></svg><span>Vector</span></div>
            <div class="row l6"><svg class="tri"></svg><svg class="s12"><use href="#rect"/></svg><span>Rectan...</span></div>
            <div class="row l5"><svg class="tri"><use href="#tri"/></svg><svg class="s12"><use href="#group"/></svg><span>Group 13</span></div>
            <div class="row l6"><svg class="tri"></svg><svg class="s12"><use href="#txt"/></svg><span>in</span></div>
            <div class="row l6"><svg class="tri"></svg><svg class="s12"><use href="#rect"/></svg><span>Rectan...</span></div>
            <div class="row l3"><svg class="tri closed"><use href="#tri"/></svg><svg class="s12"><use href="#cols"/></svg><span>Frame 19</span></div>
          </div>
        </aside>

        <div class="canvas">
          <div class="board">
            <div class="white"><div class="phone"></div></div>
            <div class="promo">
              <h1>JOIN SHOPPING COMMUNITY TO<br><span>GET MONTHLY PROMO</span></h1>
              <p>Type your email down below and be young wild generation</p>
              <div class="field"><span>Add your email here</span><b>SEND</b></div>
            </div>
            <div class="foot">
              <div class="brand">
                <h2>FASHION</h2>
                <p>Complete your style with awesome<br>clothes from us.</p>
                <div class="social">
                  <span><svg viewBox="0 0 14 14"><path d="M5.500 14V7.800H3.500V5.400h2V3.600Q5.500.5 8.500.5h2v2.300H9.200q-1.100 0-1.100 1.100v1.500h2.300L10 7.800H8.100V14z"/></svg></span>
                  <span><svg viewBox="0 0 14 14"><rect x="1.500" y="1.500" width="11" height="11" rx="3" fill="none" stroke="#000" stroke-width="1.100"/><circle cx="7" cy="7" r="2.700" fill="none" stroke="#000" stroke-width="1.100"/><circle cx="10.200" cy="3.800" r=".8"/></svg></span>
                  <span><svg viewBox="0 0 14 14"><path d="M.8 2.200Q3.500 5 6.800 5 6.500 1.500 9.500 1.300q1.200 0 2 .8l1.800-.7-.9 1.500L14 2.700l-1.500 1.500Q12.500 12 5 12.500q-3 0-5-1.300 2.500.1 4-1.200-2-.2-2.600-2h1.200Q.4 7.200.5 5l1.200.4Q.1 4 .8 2.200z"/></svg></span>
                  <span class="in">in</span>
                </div>
              </div>
              <ul class="c1"><li>Company</li><li>About</li><li>Contact us</li><li>Support</li><li>Careers</li></ul>
              <ul class="c2"><li>Quick Link</li><li>Share Location</li><li>Orders Tracking</li><li>Size Guide</li><li>FAQs</li></ul>
              <ul class="c3"><li>Legal</li><li>Terms &amp; conditions</li><li>Privacy Policy</li></ul>
            </div>
          </div>
          <div class="vbar"></div><div class="hbar"></div>
        </div>

        <aside class="right">
          <div class="rtabs"><b>Design</b><span>Prototype</span></div>
          <div class="page"><b>Page</b><div class="fill"><i></i><span>F5F5F5</span><span class="op100">100%</span><svg class="eye" viewBox="0 0 14 10"><path d="M.8 5Q3.500 1 7 1t6.200 4Q10.500 9 7 9T.8 5z" fill="none" stroke="#fff" stroke-width="1.200"/><circle cx="7" cy="5" r="2.200" fill="#fff"/></svg></div></div>
          <div class="opt">Local variables<svg viewBox="0 0 14 16"><path d="M3.500 1v8.500M3.500 12.500v2.500M10.500 1v2M10.500 7v8" stroke="#c0c0c0"/><circle cx="3.500" cy="10.700" r="1.900" fill="none" stroke="#c0c0c0"/><circle cx="10.500" cy="5" r="1.900" fill="none" stroke="#c0c0c0"/></svg></div>
          <div class="opt">Local styles<svg class="s12"><use href="#plus"/></svg></div>
          <div class="opt">Export<svg class="s12"><use href="#plus"/></svg></div>
          <div class="read"><svg viewBox="0 0 18 16"><path d="M9 2.500H1.500v11H9V2.500h7.500v11H9V15" fill="none" stroke="#111" stroke-width="1.400"/><path d="M11 5h4M11 7.500h4M11 10h4" stroke="#111" stroke-width="1.300"/></svg></div>
          <div class="mind"><svg><use href="#brain"/></svg></div>
          <div class="help"><svg viewBox="0 0 12 16"><path d="M2.200 4.500q.3-3 3.800-3t3.800 3q0 2-2 3.300T6 11M6 13.300v1.500" fill="none" stroke="#fff" stroke-width="1.200"/></svg></div>
        </aside>
      </div>
    </section>
  </main>
</div>

<div class="stub">N</div>

<footer class="taskbar">
  <span class="start"><svg viewBox="0 0 16 16"><path d="M0 2.200l6.500-.9v6.200H0zM7.300 1.200L16 0v7.500H7.300zM0 8.300h6.500v6.300L0 13.700zM7.300 8.300H16V16l-8.700-1.200z" fill="#fff"/></svg></span>
  <div class="find"><svg class="lens" viewBox="0 0 16 16"><circle cx="10" cy="6" r="5" fill="none" stroke="#fff" stroke-width="1.100"/><path d="M6.300 9.500L.5 15.300" stroke="#fff" stroke-width="1.100"/></svg><span>Введите здесь текст для поиска</span>
    <svg class="moon" viewBox="0 0 60 36"><circle cx="34" cy="18" r="16" fill="url(#g-moon)"/><path d="M34 2a16 16 0 0 1 12 27Q34 24 34 2z" fill="url(#g-moon2)" opacity=".85"/><g fill="#3d7f88" opacity=".6"><circle cx="27" cy="14" r="3.500"/><circle cx="38" cy="13" r="3"/><circle cx="33" cy="25" r="3"/><circle cx="42" cy="22" r="2"/><circle cx="33" cy="6" r="2"/></g><g fill="#e8d8b0"><circle cx="10" cy="23" r="1.200"/><circle cx="14" cy="9" r=".9"/><circle cx="9" cy="31" r=".9"/><circle cx="52" cy="7" r="1.100"/><circle cx="54" cy="25" r="1.200"/><circle cx="53" cy="16" r=".9"/><circle cx="57" cy="31" r="1"/><path d="M3 17l1 2.500 2 1-2 1-1 2.500-1-2.500-2-1 2-1z"/></g></svg></div>
  <span class="app"><svg class="i17" viewBox="0 0 18 18"><path d="M1 1v3h11V1M1 17v-3h11v3M1 6.500h11v5H1zM15.500 1v5M15.500 10v7M14.500 7.500h2" fill="none" stroke="#fff" stroke-width="1.200"/></svg></span>
  <span class="app run now"><svg class="i22"><use href="#opera"/></svg></span>
  <span class="app run ex"><svg class="i22" viewBox="0 0 22 20"><path d="M0 1h7l2 2h13v16H0z" fill="#e8a820"/><path d="M0 6h22v13H0z" fill="#fddc6c"/><path d="M4 19v-8h14v8h-4v-3.500H8V19z" fill="#3a96dd"/></svg></span>
  <span class="app"><svg class="i24" viewBox="0 0 24 24"><circle cx="12" cy="12" r="11.500" fill="#3f87d8" stroke="#9cc4ee"/><path d="M11 8.500v10M11 12a3 3 0 1 1-6 0 3 3 0 0 1 6 0zM13.500 5v10M13.500 12a3 3 0 1 0 6 0 3 3 0 0 0-6 0z" fill="none" stroke="#fff" stroke-width="1.500"/></svg></span>
  <span class="app"><svg class="i24"><use href="#ya"/></svg></span>
  <span class="app"><svg class="i22" viewBox="0 0 22 22"><path d="M2 7h17l1 14H3z" fill="#f5f5f5"/><path d="M1 4l18-3 1 4L2 8z" fill="#222"/><path d="M4 4l2 3M9 3l2 3M14 2l2 3" stroke="#fff" stroke-width="1.500"/><text x="11" y="19" text-anchor="middle" font-size="10" font-weight="700" fill="#2454c0">321</text></svg></span>
  <span class="app"><svg class="i24" viewBox="0 0 24 24"><circle cx="12" cy="12" r="12" fill="#fff"/><path d="M6 5l6 8 6-8M12 12v8" fill="none" stroke="#fa4a2a" stroke-width="3.400"/></svg></span>
  <span class="app run tgm"><svg class="i22"><use href="#tg"/></svg><em>..28</em></span>
  <div class="tray">
    <svg class="arrow" viewBox="0 0 12 8"><path d="M.8 7L6 1.500 11.200 7" fill="none" stroke="#fff" stroke-width="1.200"/></svg>
    <svg class="pen" viewBox="0 0 18 18"><path d="M6 12q-5-1-4.500 2.500t5-.5L14 4q1-3-1-3L6 9.500q-1 3 1.500 3.500L15 6.500M9 13q3 2 7-2.500 1-3-2-2" fill="none" stroke="#fff" stroke-width="1.200"/></svg>
    <span class="lang">РУС</span>
    <span class="clock">20:26<br>20.07.2024</span>
    <svg class="note" viewBox="0 0 16 16"><path d="M0 0h16v13h-5l-3 3v-3H0z" fill="#fff"/><path d="M3 4h10M3 7h10M3 10h6" stroke="#1d2c34"/></svg>
  </div>
</footer>
</body>
</html>
```
FILE: styles.css
```css
* { box-sizing: border-box; margin: 0; padding: 0; }
body {
  position: relative;
  width: 1920px; height: 1080px; overflow: hidden;
  display: flex; flex-direction: column;
  font-family: "Open Sans", "Noto Sans", sans-serif; font-size: 12px; color: #fff;
  background:
    linear-gradient(90deg, #3c86a8, #5a9cb8 15%, #3c7c9c 35%, #3a7f9e 55%, #1f6688 75%, #17577a 100%) 0 1033px / 1920px 8px no-repeat,
    linear-gradient(180deg, #3a7cc4 0, #5b9bd6 180px, #9cc6d6 430px, #c9d2b8 550px, #c4b299 620px, #8c8064 670px, #6db4c6 700px, #3c6c7c 740px, #c8ccc0 790px, #9cc8c4 850px, #58a0b0 950px, #3c86a8 1033px) 0 0 / 12px 1040px no-repeat,
    linear-gradient(180deg, #0f50a0 0, #0d5ba4 250px, #2a7ab0 360px, #5c86a0 410px, #8f9a98 440px, #b0a88c 500px, #8c8468 700px, #38566c 750px, #7a8c78 800px, #3f7c90 880px, #0e6c9c 940px, #176080 1040px) right 0 / 12px 1040px no-repeat;
}
i, em { font-style: normal; }
.defs { position: absolute; width: 0; height: 0; }
svg { display: block; flex: none; }
svg text { font-family: "Liberation Sans", Arial, sans-serif; }
.i17 { width: 18px; height: 18px; }
.i18 { width: 18px; height: 18px; }
.i20 { width: 20px; height: 20px; }
.i22 { width: 22px; height: 22px; }
.i24 { width: 24px; height: 24px; }
.s12 { width: 12px; height: 12px; }
.chev { width: 8px; height: 8px; }

.window { display: flex; gap: 4px; width: 1904px; height: 1033px; margin-left: 8px; padding: 0 3px 5px 4px; background: #020412; border-bottom: 1px solid #3d444c; flex: none; }
.rail { width: 48px; height: 1024px; margin-top: 4px; border-radius: 8px; background: #252834; display: flex; flex-direction: column; align-items: center; color: #e0e2e8; }
.op { margin-top: 15px; }
.home { width: 32px; height: 32px; margin-top: 15px; border-radius: 5px; background: #4f22ff; display: grid; place-items: center; }
.star { margin-top: 14px; }
.apps { display: flex; flex-direction: column; gap: 8px; margin-top: 258px; }
.apps span { width: 32px; height: 32px; border-radius: 5px; background: #494c66; display: grid; place-items: center; }
.rail-end { margin-top: 250px; display: flex; flex-direction: column; gap: 12px; }

.main { width: 1844px; display: flex; flex-direction: column; }
.tabs { height: 44px; display: flex; gap: 4px; align-items: center; flex: none; }
.set { display: flex; align-items: center; height: 36px; flex: none; }
.set > i { width: 20px; height: 18px; display: grid; place-items: center; border-left: 1px solid #4a4e60; padding-right: 1px; }
.set > i:first-of-type { border-left-color: transparent; }
.wide > i { width: 21px; }
.set svg { width: 16px; height: 16px; }
.island { background: #1c1e2b; border-radius: 7px; padding: 0 4px 0 6px; }
.island::before { content: ""; width: 6px; height: 24px; border-radius: 3px; margin-right: 2px; background: var(--c); }
.sand { --c: #f1c46f; } .violet { --c: #a56de2; } .aqua { --c: #6fc3d4; } .orange { --c: #f08a3e; }
.blue { --c: #2a72f5; } .red { --c: #e5485d; } .indigo { --c: #4f22ff; } .green { --c: #4cb98c; }
.active { width: 36px; height: 28px; border-radius: 4px; background: #3d4057; display: flex; align-items: center; padding-left: 4px; gap: 3px; font-weight: 400; overflow: hidden; }
.newtab { width: 18px; height: 18px; border-radius: 50%; background: #252834; display: grid; place-items: center; margin-left: 3px; }
.newtab svg { width: 9px; height: 9px; }
.caption { margin-left: auto; display: flex; gap: 20px; padding-right: 10px; }
.caption svg { width: 16px; height: 16px; }

.panel { background: #252834; border-radius: 7px; display: flex; align-items: center; flex: none; }
.addr-row { display: flex; gap: 2px; height: 39px; flex: none; }
.addr { width: 1657px; padding: 0 0 1px 9px; }
.addr > svg { width: 16px; height: 16px; margin-right: 20px; }
.addr > .lock { margin: 0 11px 0 2px; }
.addr > svg:nth-child(3) { margin-right: 21px; margin-left: -4px; }
.url { font-size: 13px; letter-spacing: -.31px; color: #a9adba; white-space: nowrap; }
.url em { color: #fff; }
.tools { margin-left: auto; display: flex; align-items: center; gap: 14px; margin-right: 11px; color: #b4b7c2; }
.tools svg { width: 16px; height: 16px; }
.tools .hot { color: #fff; }
.user { width: 24px; height: 24px; border-radius: 4px; background: #494c66; display: grid; place-items: center; margin-left: -4px; }
.ext { width: 185px; gap: 16px; padding: 0 0 1px 17px; }
.ext svg { width: 16px; height: 16px; }
.mark { width: 6px; height: 24px; border-radius: 3px; background: #4f22ff; margin-left: -4px; }

.bookmarks { margin-top: 1px; height: 34px; padding-left: 12px; display: grid; grid-template-columns: 144.500px 146px 139.500px 147px 145px 146.500px 150.500px 141px 150px 146px 145px 195px 16px; }
.bookmarks a { display: flex; align-items: center; gap: 6px; white-space: nowrap; letter-spacing: -.25px; }
.bookmarks svg { width: 16px; height: 16px; }
.notice { margin-top: 2px; height: 51px; padding: 1px 16px 0 18px; }
.notice p { margin-left: 20px; letter-spacing: -.42px; white-space: nowrap; }
.notice button { margin-left: auto; width: 160px; height: 21px; border: 1px solid #6a6a6a; border-radius: 2px; background: #7f7f7f; color: #fff; font: inherit; letter-spacing: -.47px; line-height: 18px; }

.figma { margin-top: 2px; height: 855px; background: #2c2c2c; border-radius: 8px; overflow: hidden; font-family: Inter, sans-serif; font-size: 11px; display: flex; flex-direction: column; }
.bar { height: 48px; border-bottom: 1px solid #444; display: flex; align-items: center; flex: none; }
.cell { width: 48px; height: 47px; display: flex; align-items: center; padding-left: 12px; gap: 5px; }
.cell svg { width: 18px; height: 18px; }
.cell .chev, .crumb .chev { width: 8px; height: 8px; }
.cell.logo { width: 52px; padding-left: 13px; gap: 4px; }
.cell.logo svg:first-child { width: 14px; }
.cell.on { background: #0c8ce9; }
.cell.one { width: 40px; padding-left: 10px; }
.cell.comp { padding-left: 12px; }
.cell .hand { width: 20px; height: 20px; }
.crumb { display: flex; align-items: center; margin-left: 341px; font-size: 14px; }
.crumb span { color: #b0b0b0; }
.crumb u { color: #7a7a7a; text-decoration: none; margin: 0 8.500px; }
.crumb strong { font-weight: 500; letter-spacing: -.15px; }
.crumb em { width: 33px; height: 16px; border-radius: 3px; background: #394360; color: #7cc0f8; font-size: 11px; font-weight: 600; line-height: 16px; text-align: center; margin: 0 13px 0 10px; }
.acts { margin-left: auto; display: flex; align-items: center; padding-right: 15px; }
.me { width: 50px; height: 32px; border-radius: 16px; background: #383838; display: flex; align-items: center; gap: 7px; padding-left: 4px; }
.face { width: 24px; height: 24px; }
.share { width: 54px; height: 32px; margin: 0 8px; border: 0; border-radius: 5px; background: #0c8ce9; color: #fff; font: 500 11.500px Inter, sans-serif; }
.toggle { width: 48px; height: 32px; border-radius: 16px; background: #444; padding: 4px; }
.toggle span { width: 24px; height: 24px; border-radius: 50%; background: #2c2c2c; display: grid; place-items: center; }
.toggle svg { width: 16px; height: 12px; }
.book { margin-left: 23px; }
.play { margin: 0 4px 0 25px; }
.pct { margin: 0 5px 0 15px; font-weight: 500; }

.work { flex: 1; display: flex; min-height: 0; }
.left { width: 241px; border-right: 1px solid #444; display: flex; flex-direction: column; overflow: hidden; flex: none; font-weight: 500; }
.ltabs { height: 41px; border-bottom: 1px solid #444; display: flex; align-items: center; padding-left: 18px; flex: none; }
b { font-weight: 600; }
.ltabs b { margin-left: 10px; }
.assets { position: relative; margin-left: 15px; color: #b3b3b3; }
.assets i { position: absolute; right: -5px; top: -2px; width: 4px; height: 4px; border-radius: 50%; background: #0c8ce9; }
.pg { display: flex; align-items: center; gap: 4px; margin-left: 32px; }
.turn { width: 12px; height: 10px; }
.up { transform: rotate(180deg); color: #999; }
.ltabs .up { margin-left: 9px; }
.pages { height: 148px; border-bottom: 1px solid #444; flex: none; }
.phead { height: 36px; padding: 4px 19px 0 16px; display: flex; justify-content: space-between; align-items: center; }
.prow { height: 32px; padding-left: 40px; display: flex; align-items: center; white-space: nowrap; position: relative; }
.prow .turn { margin-right: 3.500px; }
.emoji { width: 12px; height: 12px; margin: 0 1px; }
.check { position: absolute; left: 17px; width: 10px; height: 8px; }
.root { height: 33px; border-bottom: 1px solid #444; display: flex; align-items: center; padding-left: 4px; flex: none; }
.tri { width: 8px; height: 8px; }
.root .s12 { margin: 0 10px 0 6px; }
.tree { flex: 1; overflow: hidden; }
.row { height: 32px; display: flex; align-items: center; white-space: nowrap; }
.cut { margin-top: -12px; }
.row .s12 { margin: 0 10px 0 14px; }
.row .closed { transform: rotate(-90deg); }
.l1 { padding-left: 20px; } .l2 { padding-left: 44px; } .l3 { padding-left: 68px; }
.l4 { padding-left: 92px; } .l5 { padding-left: 116px; } .l6 { padding-left: 140px; }

.canvas { position: relative; flex: 1; background: #f5f5f5; padding-left: 120px; overflow: hidden; }
.board { width: 1039px; }
.white { height: 122px; background: #fff; position: relative; overflow: hidden; }
.phone { position: absolute; left: 651px; top: -72px; width: 198px; height: 88px; border: 12px solid #c3c8dc; border-radius: 30px; background: #fff; box-shadow: 0 6px 22px rgba(60, 60, 70, .28); }
.promo { height: 337px; background: #e4c642; display: flex; flex-direction: column; align-items: center; padding-top: 77px; }
h1 { font: 900 29px/38px Inter, sans-serif; letter-spacing: 1.190px; text-align: center; white-space: nowrap; width: 1038px; }
h1 span { letter-spacing: 1.030px; }
.promo p { font-size: 18px; line-height: 24px; letter-spacing: .71px; margin-top: 9px; color: #fffbe6; padding-right: 7px; }
.field { width: 311px; height: 47px; margin: 20px 0 0 0; border-radius: 4px; background: #fff; display: flex; align-items: center; justify-content: space-between; padding: 0 5px 0 15px; }
.field span { color: #777; font-size: 13px; letter-spacing: .8px; }
.field b { width: 88px; height: 37px; border-radius: 3px; background: #000; font-size: 17px; font-weight: 500; letter-spacing: .2px; line-height: 38px; text-align: center; }
.foot { height: 295px; background: #000; padding: 62px 0 0 54px; display: grid; grid-template-columns: 449.500px 167px 198px 170px; font-family: Roboto, sans-serif; font-size: 13px; color: #8d8d8d; align-items: start; }
h2 { font: 900 22px/38px Inter, sans-serif; letter-spacing: .7px; color: #fff; }
.brand p { line-height: 22px; letter-spacing: .25px; margin-top: 10px; }
.social { display: flex; gap: 8px; margin-top: 17px; }
.social span { width: 28px; height: 28px; border-radius: 7px; background: #e9d868; display: grid; place-items: center; color: #111; }
.social svg { width: 14px; height: 14px; }
.social .in { font: 700 13px/26px Inter, sans-serif; text-shadow: 0 2px 2px rgba(0, 0, 0, .3); }
ul { list-style: none; padding-top: 9px; white-space: nowrap; letter-spacing: .24px; }
li { height: 16px; line-height: 16px; margin-bottom: 16.500px; }
li:first-child { color: #e8e8e8; }
.c1 li:nth-child(3) { margin-bottom: 19px; }
.c2 li { margin-bottom: 17px; color: #7c7c7c; }
.c2 li:nth-child(3) { margin-bottom: 16px; }
.c2 li:first-child { color: #e8e8e8; }
.c3 li:first-child { margin-bottom: 17px; }
.vbar { position: absolute; right: 5px; top: 632px; width: 6px; height: 162px; border-radius: 3px; background: #a8a8a8; }
.hbar { position: absolute; left: 788px; bottom: 4px; width: 357px; height: 6px; border-radius: 3px; background: #a8a8a8; }

.right { position: relative; width: 241px; border-left: 1px solid #444; flex: none; font-weight: 500; }
.rtabs { height: 41px; border-bottom: 1px solid #444; display: flex; align-items: center; gap: 15px; padding-left: 16px; }
.rtabs span, .opt { color: #b3b3b3; }
.page { height: 81px; border-bottom: 1px solid #444; padding: 17px 16px 0; }
.page > b { display: block; line-height: 14px; }
.fill { display: flex; align-items: center; margin-top: 17px; height: 16px; }
.fill i { width: 16px; height: 16px; border-radius: 1px; background: #f5f5f5; margin-right: 8px; }
.op100 { margin-left: 32px; }
.eye { width: 14px; height: 10px; margin-left: auto; margin-right: 1px; }
.opt { height: 49px; border-bottom: 1px solid #444; display: flex; align-items: center; justify-content: space-between; padding: 0 18px 0 16px; }
.opt svg:not(.s12) { width: 14px; height: 16px; margin-right: -1px; }
.read { position: absolute; left: 198px; top: 543px; width: 38px; height: 38px; border-radius: 50%; background: #fafafa; display: grid; place-items: center; }
.read svg { width: 18px; height: 16px; }
.mind { position: absolute; right: 0; top: 589px; width: 49px; height: 46px; border-radius: 23px 0 0 23px; background: #fafafa; display: grid; place-items: center; padding-left: 5px; }
.mind svg { width: 24px; height: 22px; }
.help { position: absolute; left: 192px; top: 759px; width: 32px; height: 32px; border-radius: 50%; background: #1e1e1e; display: grid; place-items: center; }
.help svg { width: 12px; height: 16px; }

.stub { position: absolute; left: 3px; top: 261px; width: 5px; overflow: hidden; font-size: 11px; line-height: 14px; text-shadow: 0 0 2px #000; }

.taskbar { margin-top: 7px; height: 40px; background: linear-gradient(90deg, #23343c, #24363c 45%, #1c2b34); display: flex; align-items: center; flex: none; }
.start { width: 48px; display: grid; place-items: center; }
.start svg { width: 16px; height: 16px; }
.find { width: 344px; height: 40px; border: 1px solid #5c5c5c; background: #323232; display: flex; align-items: center; padding-left: 11px; color: #dcdcdc; font-size: 15px; letter-spacing: -.46px; white-space: nowrap; }
.lens { width: 16px; height: 16px; margin-right: 12px; }
.moon { width: 60px; height: 36px; margin-left: 14px; }
.app { width: 49px; height: 40px; display: grid; place-items: center; position: relative; }
.run { box-shadow: inset 0 -2px #5596d4; }
.now { background: #4d5b62; margin-left: 1px; }
.ex { width: 45px; margin: 0 2px; }
.tgm { width: 41px; margin: 0 5px; }
.tgm em { position: absolute; left: 19px; top: 23px; width: 16px; height: 11px; border-radius: 2px; background: #ee3b3b; font-size: 9px; line-height: 11px; text-align: center; letter-spacing: -.5px; }
.tray { margin-left: auto; display: flex; align-items: center; width: 205px; height: 40px; }
.arrow { width: 12px; height: 8px; }
.pen { width: 18px; height: 18px; margin-left: 13px; }
.lang { margin-left: 14px; width: 23px; letter-spacing: -.6px; }
.clock { width: 56px; margin-left: 12px; text-align: center; line-height: 18px; letter-spacing: -.8px; }
.note { width: 16px; height: 16px; margin: 2px 0 0 16px; }
.tray::after { content: ""; width: 1px; height: 40px; margin-left: auto; margin-right: 4px; background: #7c868c; }
```
